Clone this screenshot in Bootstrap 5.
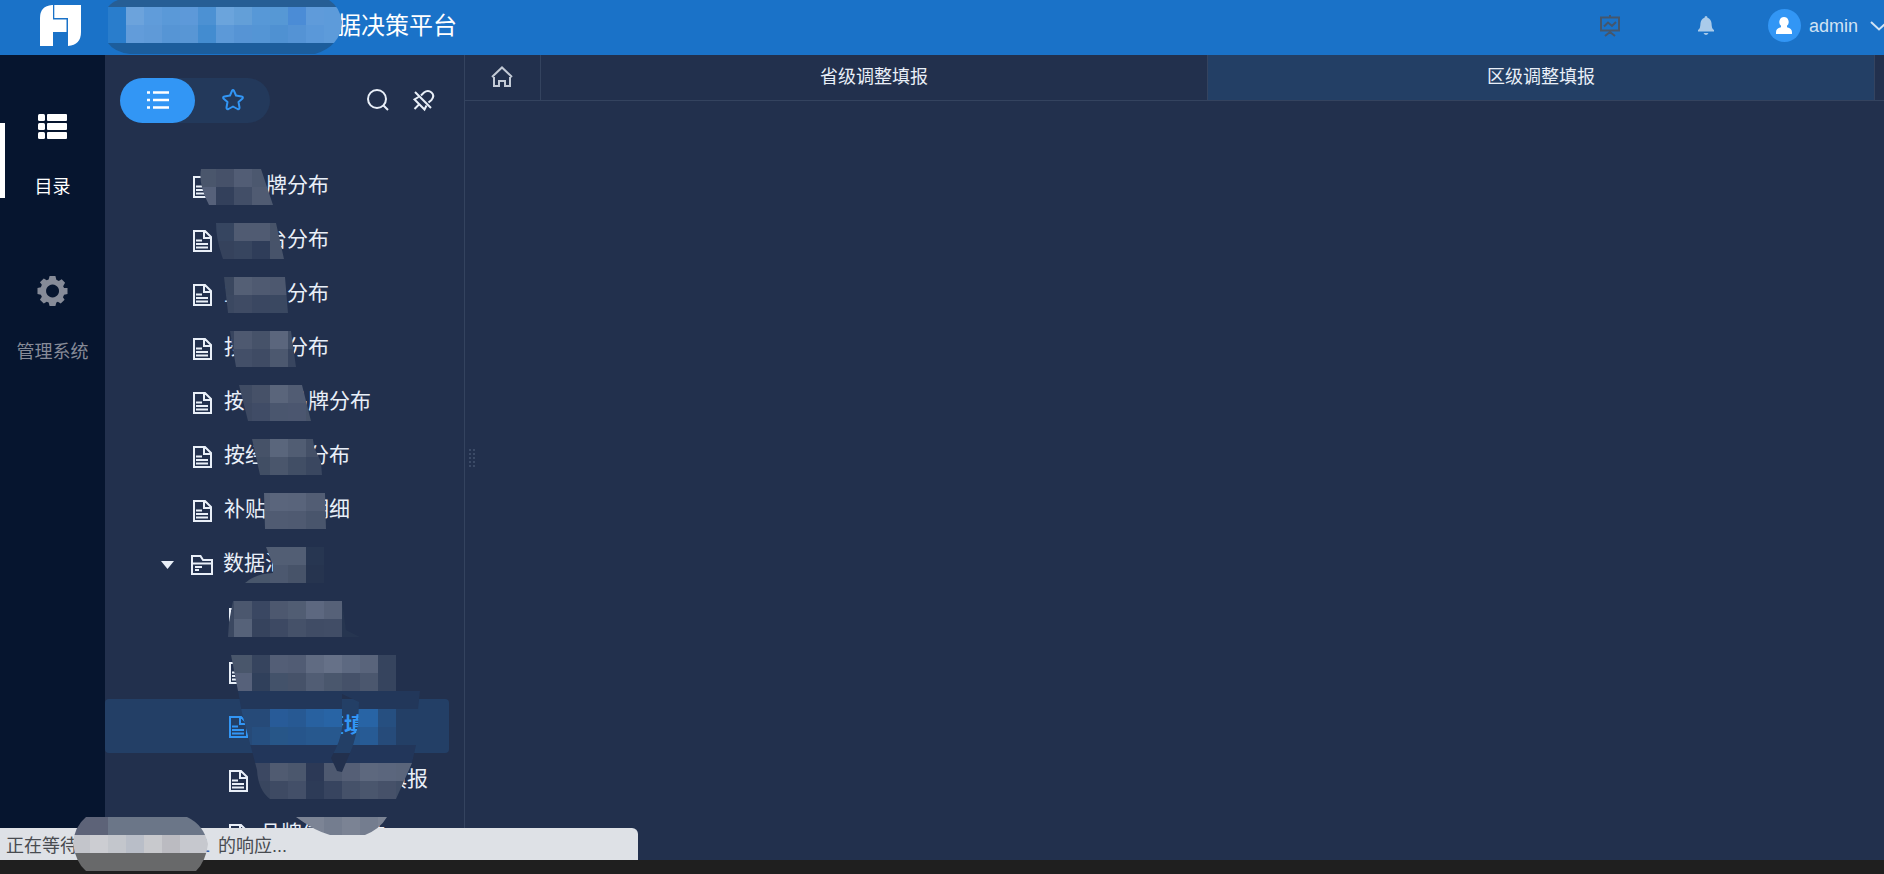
<!DOCTYPE html>
<html lang="zh-CN">
<head>
<meta charset="utf-8">
<meta name="viewport" content="width=device-width, initial-scale=1">
<title>数据决策平台</title>
<link href="https://cdn.jsdelivr.net/npm/bootstrap@5.3.0/dist/css/bootstrap.min.css" rel="stylesheet">
<style>
  body { font-family: "Liberation Sans", "Noto Sans CJK SC", sans-serif; font-size: 18px; line-height: 24px; background: #22304d; color: #e9eff8; }
  button { font: inherit; color: inherit; }
  a { color: inherit; text-decoration: none; }
  svg { display: block; flex: none; overflow: visible; }
  .line { fill: none; stroke: currentColor; stroke-width: 2; }

  .topbar { height: 55px; background: #1a72c8; padding: 0 0 4px 40px; }
  .brand-text { font-size: 24px; line-height: 32px; color: #fff; margin: 0 0 0 256px; }
  .plain-btn { background: none; border: 0; padding: 0; }
  .top-tools { gap: 78px; margin-right: -4px; }
  .account { gap: 8px; margin-left: -24px; color: #d1e3f4; }
  .avatar { width: 33px; height: 33px; background: #3296f5; color: #fff; }
  .screen-btn { color: #44566c; }
  .bell-btn { color: #aacbea; }

  .rail { width: 105px; background: #06152f; padding-top: 56px; }
  .rail-item { width: 100%; height: 165px; gap: 34px; color: #868b98; }
  .rail-item svg { height: 30px; }
  .rail-item.active { color: #fff; }
  .rail-item.active::before { content: ""; position: absolute; left: 0; top: 12px; width: 5px; height: 75px; background: #fff; }

  .side { width: 360px; border-right: 1px solid #34435f; }
  .side-tools { height: 104px; padding: 0 30px 14px 15px; }
  .pin-btn { margin-left: 24px; }
  .switcher { background: #23395b; }
  .switcher button { width: 75px; height: 45px; color: #3296f5; }
  .switcher button.active { background: #3296f5; color: #fff; }
  .tree-row { height: 54px; width: 344px; padding: 2px 0 0 86px; gap: 10px; font-size: 21px; line-height: 28px; border-radius: 4px; white-space: nowrap; }
  .tree-row.deep { padding-left: 122px; }
  .tree-row.folder { padding-left: 56px; }
  .tree-row.folder svg:first-child { margin-right: 7px; }
  .tree-row.active { background: #233f66; color: #3296f5; font-weight: 700; }
  .tree-row .label { padding-bottom: 4px; }
  .gap1 { display: inline-block; width: 1em; }
  .gap2 { display: inline-block; width: 2em; }
  .gap3 { display: inline-block; width: 3em; }
  .gap6 { display: inline-block; width: 6em; }

  .tabs { height: 46px; border-bottom: 1px solid #34435f; padding-right: 9px; }
  .tab-home { width: 76px; border-right: 1px solid #34435f; padding: 0 2px 2px 0; color: #c3cad6; }
  .tab-page { border-right: 1px solid #34435f; padding-bottom: 2px; }
  .tab-page.active { background: #233f65; }
  .grip { color: #3b4a66; left: 4px; top: 394px; }

  .statusbar { left: 0; bottom: 14px; width: 638px; height: 32px; padding: 6px 6px 0; background: #dee1e6; color: #484b50; border-radius: 0 6px 0 0; z-index: 2; }
  .statusbar .host { width: 132px; text-align: right; color: #3c5fa8; margin-right: 8px; }
  .bottom-strip { height: 14px; background: #1f1f1f; z-index: 1; }
  .cover { pointer-events: none; z-index: 3; }
</style>
</head>
<body class="vh-100 overflow-hidden d-flex flex-column">

<header class="topbar d-flex align-items-center position-relative flex-shrink-0">
  <svg width="41" height="41" viewBox="0 0 41 41" fill="#fff" role="img" aria-label="logo">
    <path d="M13 0H12Q0 1 0 13V41H13V27H26.500V14.500H13Z"/>
    <path d="M14.300 0H41V27Q41 40 28 41V13H14.300Z"/>
  </svg>
  <svg class="cover position-absolute top-0 start-0" width="345" height="55" aria-hidden="true">
    <defs><clipPath id="titleClip"><path d="M118 0H329Q340 7 342 22Q341 46 315 54H130Q114 52 108 43V7Q112 2 118 0Z"/></clipPath></defs>
    <g id="titleCells" clip-path="url(#titleClip)"></g>
  </svg>
  <h1 class="brand-text fw-normal text-nowrap">据决策平台</h1>
  <div class="top-tools d-flex align-items-center ms-auto">
    <button class="plain-btn screen-btn" aria-label="大屏"><svg width="20" height="22" viewBox="0 0 20 22" class="line"><path d="M1 2.500H19V15.500H1ZM10 0V2M4 11.500l4-4 4 3.500 4-4M5 21l5-4 5 4"/></svg></button>
    <button class="plain-btn bell-btn" aria-label="消息"><svg width="16" height="19" viewBox="0 0 16 19" fill="currentColor"><path d="M8 0q1.500 0 1.500 1.800Q13 3 13.500 7c.3 4 .5 6 2.500 7v1.500H0V14c2-1 2.200-3 2.500-7Q3 3 6.500 1.800 6.500 0 8 0ZM5.500 17h5q-1 2-2.500 2t-2.500-2Z"/></svg></button>
    <button class="plain-btn account d-flex align-items-center">
      <span class="avatar rounded-circle d-flex align-items-center justify-content-center"><svg width="16" height="18" viewBox="0 0 16 18" fill="currentColor"><path d="M8 0a4.700 5 0 0 1 3 8.800v1.400q5 1 5 5V17H0v-1.800q0-4 5-5V8.800A4.700 5 0 0 1 8 0Z"/></svg></span>
      <span>admin</span>
      <svg width="18" height="10" viewBox="0 0 18 10" class="line ms-1"><path d="M1 1l8 7.500L17 1"/></svg>
    </button>
  </div>
</header>

<div class="d-flex flex-grow-1" style="min-height:0">
  <nav class="rail flex-shrink-0">
    <button class="plain-btn rail-item active position-relative d-flex flex-column align-items-center">
      <svg width="29" viewBox="0 0 29 30" fill="currentColor"><rect y="3" width="7" height="7" rx="1.500"/><rect x="9" y="3" width="20" height="7" rx="1"/><rect y="12" width="7" height="7" rx="1.500"/><rect x="9" y="12" width="20" height="7" rx="1"/><rect y="21" width="7" height="7" rx="1.500"/><rect x="9" y="21" width="20" height="7" rx="1"/></svg>
      <span>目录</span>
    </button>
    <button class="plain-btn rail-item d-flex flex-column align-items-center">
      <svg width="31" viewBox="-15.500 -15.500 31 31" fill="currentColor"><path fill-rule="evenodd" d="M-3 -15.500H3L4 -11.500L6.500 -10.300L9.500 -12.200L13 -8.500L11 -5L12 -3.200L15.500 -3V3L12 3.800L10.800 6.500L12.500 9L8.500 13L5.500 11L4 11.800L3 15.500H-3L-4 11.800L-6 11L-9 13L-13 9L-11 6L-12 3.800L-15.500 3V-3L-12 -4L-11 -6.500L-13 -9L-9 -13L-6 -11L-4 -11.800ZM0 -6.700A6.700 6.700 0 1 0 .1 -6.700Z"/></svg>
      <span>管理系统</span>
    </button>
  </nav>

  <aside class="side flex-shrink-0">
    <div class="side-tools d-flex align-items-center">
      <div class="switcher rounded-pill d-flex">
        <button class="plain-btn active rounded-pill d-flex align-items-center justify-content-center" aria-label="目录"><svg width="22" height="20" viewBox="0 0 22 20" class="line" style="stroke-width:2.500"><path d="M0 2.500H3M6 2.500H22M0 10H3M6 10H22M0 17.500H3M6 17.500H22"/></svg></button>
        <button class="plain-btn rounded-pill d-flex align-items-center justify-content-center" aria-label="收藏"><svg width="22" height="22" viewBox="0 0 22 22" class="line" stroke-linejoin="round"><path d="M10 1.800Q11 .2 12 1.800L14 6.500L19.500 7.500Q21.800 8 20.300 9.800L16.500 13L17.500 18.500Q17.600 20.600 15.500 20L11 17.500L6.500 20Q4.400 20.600 4.500 18.500L5.500 13L1.700 9.800Q.2 8 2.500 7.500L8 6.500Z"/></svg></button>
      </div>
      <button class="plain-btn ms-auto" aria-label="搜索"><svg width="22" height="22" viewBox="0 0 22 22" class="line"><circle cx="10" cy="10" r="9"/><path d="M16 16l5 5"/></svg></button>
      <button class="plain-btn pin-btn" aria-label="取消固定"><svg width="21" height="21" viewBox="0 0 21 21" class="line"><path d="M2 2L18 18M8 5.500L11 2.500Q15-.5 18.500 2.500T18.500 10L15.500 12.500M5.500 7L1.500 9.500L11.500 19.500L13.500 15.500M6 14.500L1.500 19"/></svg></button>
    </div>

    <div class="position-relative" id="tree">
      <a href="#" class="tree-row d-flex align-items-center"><svg width="23" height="22"><use href="#doc"/></svg><span class="label"><span class="gap1"></span>品牌分布</span></a>
      <a href="#" class="tree-row d-flex align-items-center"><svg width="23" height="22"><use href="#doc"/></svg><span class="label"><span class="gap2"></span>台分布</span></a>
      <a href="#" class="tree-row d-flex align-items-center"><svg width="23" height="22"><use href="#doc"/></svg><span class="label">主<span class="gap2"></span>分布</span></a>
      <a href="#" class="tree-row d-flex align-items-center"><svg width="23" height="22"><use href="#doc"/></svg><span class="label">按<span class="gap2"></span>分布</span></a>
      <a href="#" class="tree-row d-flex align-items-center"><svg width="23" height="22"><use href="#doc"/></svg><span class="label">按<span class="gap2"></span>品牌分布</span></a>
      <a href="#" class="tree-row d-flex align-items-center"><svg width="23" height="22"><use href="#doc"/></svg><span class="label">按经<span class="gap2"></span>分布</span></a>
      <a href="#" class="tree-row d-flex align-items-center"><svg width="23" height="22"><use href="#doc"/></svg><span class="label">补贴<span class="gap2"></span>明细</span></a>
      <a href="#" class="tree-row folder d-flex align-items-center"><svg width="13" height="8" viewBox="0 0 13 8" fill="currentColor"><path d="M0 0H13L6.500 8Z"/></svg><svg width="22" height="20" viewBox="0 0 22 20" class="line"><path d="M1 19V1H9.500L12 5H21V19ZM1 8.500H21M4 12H11M4 15H8"/></svg><span class="label">数据汇</span></a>
      <a href="#" class="tree-row deep d-flex align-items-center" aria-label="报表"><svg width="23" height="22"><use href="#doc"/></svg></a>
      <a href="#" class="tree-row deep d-flex align-items-center" aria-label="报表"><svg width="23" height="22"><use href="#doc"/></svg></a>
      <a href="#" class="tree-row deep active d-flex align-items-center"><svg width="23" height="22"><use href="#doc"/></svg><span class="label"><span class="gap3"></span>整填</span></a>
      <a href="#" class="tree-row deep d-flex align-items-center"><svg width="23" height="22"><use href="#doc"/></svg><span class="label"><span class="gap6"></span>填报</span></a>
      <a href="#" class="tree-row deep d-flex align-items-center"><svg width="23" height="22"><use href="#doc"/></svg><span class="label">品牌信<span class="gap2"></span>件</span></a>

      <svg class="cover position-absolute top-0 start-0" width="360" height="680" viewBox="105 159 360 680" aria-hidden="true">
        <defs>
          <clipPath id="treeClip"><path clip-rule="evenodd" d="M201 169H261L273 205H209Q198 184 201 169Z
            M216 223H276L284 259H223Q216 240 216 223Z M224 277H285L288 313H228Z M230 331H291L296 367H236Z
            M239 385H302L311 421H248Z M252 439H313L314 447L321 462L322 475H260Z M264 493H325L326 529H265Z
            M266 547H324V583H245Q255 574 273 573V565Z
            M233 601H342L346 630L360 637H228L229 622Z
            M231 655H396V691H420L418 709L416 745L412 763L396 799H270Q258 790 257 770L242 713L238 691Z
            M342 694L359 702L358 725Q354 745 350 753L342 772L337 771L331 758Q341 740 342 728Z
            M296 817H387Q380 829 365 835H330Q315 831 296 817Z"/></clipPath>
        </defs>
        <g id="treeCells" clip-path="url(#treeClip)"></g>
      </svg>
    </div>
  </aside>

  <main class="flex-grow-1 position-relative">
    <div class="tabs d-flex">
      <button class="plain-btn tab-home d-flex align-items-center justify-content-center" aria-label="首页"><svg width="22" height="21" viewBox="0 0 22 21" class="line"><path d="M1 11L11 1.500L21 11M3 11V20H8V15H14V20H19V11"/></svg></button>
      <button class="plain-btn tab-page flex-fill">省级调整填报</button>
      <button class="plain-btn tab-page active flex-fill">区级调整填报</button>
    </div>
    <svg class="grip position-absolute" width="10" height="20" viewBox="0 0 10 20" fill="none" stroke="currentColor" stroke-width="2" stroke-dasharray="2 2"><path d="M1 0V20M5 0V20"/></svg>
  </main>
</div>

<div class="statusbar position-absolute d-flex" role="status"><span>正在等待</span><span class="host">1</span><span>的响应...</span></div>
<footer class="bottom-strip flex-shrink-0 position-relative"></footer>
<svg class="cover position-absolute bottom-0 start-0" width="212" height="57" viewBox="0 817 212 57" aria-hidden="true">
  <defs><clipPath id="hostClip"><path d="M86 817H187Q204 825 208 844Q206 861 196 871H86Q76 863 73 844Q74 827 86 817Z"/></clipPath></defs>
  <g id="hostCells" clip-path="url(#hostClip)"></g>
</svg>

<svg width="0" height="0" class="position-absolute" aria-hidden="true"><symbol id="doc" viewBox="0 0 23 22" overflow="visible"><path class="line" d="M3 1H14L20 7V21H3ZM13 1V8H20M5 10.500H11M5 14H17M5 17.500H17"/></symbol></svg>

<script src="https://cdn.jsdelivr.net/npm/bootstrap@5.3.0/dist/js/bootstrap.bundle.min.js"></script>
<script>
  // Each entry: group id, left edge, top edge, row height, colours of successive 18px cells.
  const cells = [
    ['titleCells', 108, 0, 7, Array(13).fill('265e95').join(' ')],
    ['titleCells', 108, 7, 18, '297dcc 6ca3dc 609cda 5a99d8 5d99d9 4c91d3 6ba4dc 639fd8 5798d7 5698d5 4b8cd6 5f9bda 5d9bda'],
    ['titleCells', 108, 25, 18, '297dcc 629cda 5f9ad8 5695d5 5896d5 438cd0 5c99d8 5694d5 5495d5 4f91d2 5493d5 5a98d9 5d9bda'],
    ['titleCells', 108, 43, 12, Array(13).fill('1c5d9c').join(' ')],
    ['treeCells', 198, 169, 18, '4a566c 465169 525d75 4c586f 4c586f'],
    ['treeCells', 198, 187, 18, '56617a 33405b 424e67 505b72 4c586f'],
    ['treeCells', 216, 223, 18, '364560 505b72 505b72 475369'],
    ['treeCells', 216, 241, 18, '35425c 37455f 2f3d59 47536a'],
    ['treeCells', 216, 277, 18, '3a475f 545f75 4f5a71 4d586f'],
    ['treeCells', 216, 295, 18, '3b4861 3f4b64 3a4761 3a4861'],
    ['treeCells', 216, 331, 18, '38455f 4e5970 465269 5b667d 414e66'],
    ['treeCells', 216, 349, 18, '3c4962 434f68 3f4b64 4c586f 38455f'],
    ['treeCells', 234, 385, 18, '3f4b63 465168 5a657b 515c73 475369'],
    ['treeCells', 234, 403, 18, '3d4962 404c66 4a566e 4b566f 475369'],
    ['treeCells', 252, 439, 18, '465268 5a667c 515d73 445067'],
    ['treeCells', 252, 457, 18, '414e64 4a566c 414e65 3a4760'],
    ['treeCells', 252, 493, 18, '566178 5a657c 59647b 525d74 525d74'],
    ['treeCells', 252, 511, 18, '505b72 505b72 4f5a71 49556c 49556c'],
    ['treeCells', 234, 547, 18, '505c72 505c72 525e74 525e74 273651'],
    ['treeCells', 234, 565, 18, '48566b 48566b 4c586f 475369 26344f'],
    ['treeCells', 216, 601, 18, '3b4861 4b576e 3a4762 4d586f 515d73 5d6880 566178 263550'],
    ['treeCells', 216, 619, 18, '3b4861 566279 36435d 3d4963 455169 404c65 414d66 263550'],
    ['treeCells', 216, 655, 18, '49566b 49566b 36445e 535e76 515c74 606b82 667188 5d6981 59647b 36445e'],
    ['treeCells', 216, 673, 18, '56617a 56617a 30405b 43526a 465269 515d74 4a576d 455169 4b576e 36445e'],
    ['treeCells', 234, 691, 18, Array(11).fill('22375a').join(' ')],
    ['treeCells', 234, 709, 18, '264a78 264a78 285b98 275993 2861a0 2864a5 2864a5 2864a5 264f80'],
    ['treeCells', 234, 727, 18, '264a78 264f80 275688 26558b 27588e 27588e 27588e 275b95 264b7a'],
    ['treeCells', 234, 745, 18, Array(11).fill('22365a').join(' ')],
    ['treeCells', 252, 763, 18, '3c4862 505b71 4b576d 2c3956 4e5970 555f76 5d687e 5b667d 5a657b'],
    ['treeCells', 252, 781, 18, '39465f 3e4a63 434f68 2d3b57 37445f 455169 4a566d 465169 414e66'],
    ['treeCells', 288, 817, 18, '7c8495 7c8495 747d8f 7b8394 747d8f 7b8394'],
    ['hostCells', 72, 817, 18, '5d6378 5d6378 6b7688 6b7688 6b7688 6b7688 6b7688 6b7688'],
    ['hostCells', 72, 835, 18, 'c3c5cb cccdd2 c3c6cc b9bec8 c8c9cd bbbbc1 c6c8ce c6c8ce'],
    ['hostCells', 72, 853, 18, Array(8).fill('68696a').join(' ')]
  ];
  for (const [id, x, y, h, colours] of cells) {
    colours.split(' ').forEach((c, i) => {
      const r = document.createElementNS('http://www.w3.org/2000/svg', 'rect');
      r.setAttribute('x', x + i * 18);
      r.setAttribute('y', y);
      r.setAttribute('width', 18);
      r.setAttribute('height', h);
      r.setAttribute('fill', '#' + c);
      r.setAttribute('shape-rendering', 'crispEdges');
      document.getElementById(id).appendChild(r);
    });
  }
</script>
</body>
</html>
